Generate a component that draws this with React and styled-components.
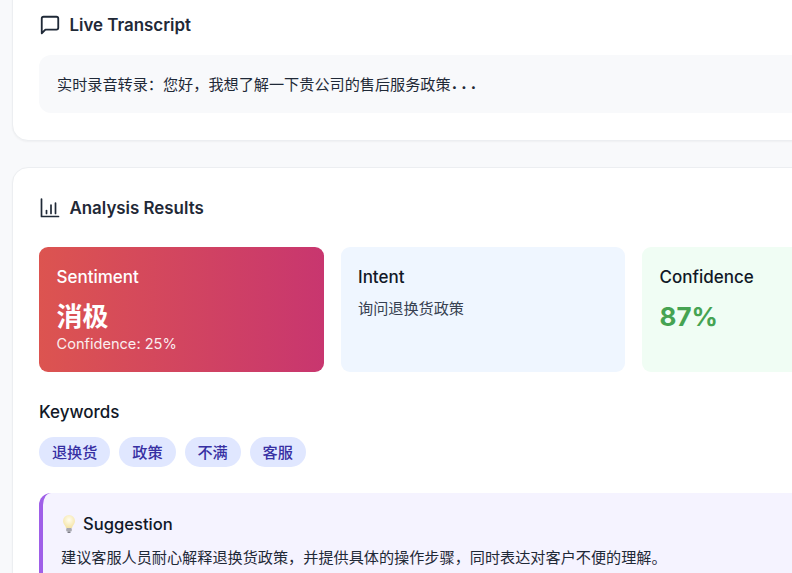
import React from 'react';
import styled, { createGlobalStyle } from 'styled-components';

const GlobalStyle = createGlobalStyle`
  html, body {
    margin: 0;
    padding: 0;
    height: 573px;
    overflow: hidden;
    background: #f8f9fb;
  }
  body {
    font-family: Inter, "Noto Sans CJK SC", sans-serif;
    color: #111827;
  }
`;

const Page = styled.div`
  width: 939px;
  margin-left: 12px;
  margin-top: -24px;
  display: flex;
  flex-direction: column;
  gap: 26px;
`;

const Card = styled.section`
  box-sizing: border-box;
  background: #fff;
  border: 1px solid #eceef1;
  border-radius: 16px;
  box-shadow: 0 1px 2px rgba(0, 0, 0, 0.04);
  padding: ${(p) => p.$padding};
`;

const CardHeader = styled.div`
  display: flex;
  align-items: center;
  gap: 8.5px;
  height: 24px;
  margin-bottom: ${(p) => p.$gap}px;
  font-size: 16.9px;
  font-weight: 600;
  color: #1f2937;
`;

const TranscriptBox = styled.div`
  box-sizing: border-box;
  height: 58px;
  display: flex;
  align-items: center;
  padding: 0 18px 3px;
  background: #f8f9fb;
  border-radius: 12px;
  font-size: 15.15px;
  color: #1f2937;
`;

const Dots = styled.span`
  font-weight: 800;
  letter-spacing: 4.2px;
  margin-left: 1px;
  padding-top: 1px;
`;

const ResultGrid = styled.div`
  display: grid;
  grid-template-columns: repeat(3, 284.5px);
  gap: 17px;
  margin-bottom: 28px;
`;

const ResultCard = styled.div`
  box-sizing: border-box;
  height: 125px;
  padding: 18px 17.5px 0;
  border-radius: 9px;
  background: ${(p) => p.$bg};
  color: ${(p) => p.$color || '#111827'};
`;

const ResultTitle = styled.div`
  font-size: 17px;
  font-weight: 500;
  line-height: 24px;
  margin-bottom: 9px;
`;

const BigValue = styled.div`
  font-size: 26px;
  font-weight: 700;
  line-height: 38px;
  color: ${(p) => p.$color || 'inherit'};
`;

const SubText = styled.div`
  font-size: 14.6px;
  line-height: 17px;
  opacity: 0.9;
`;

const IntentText = styled.div`
  font-size: 15.15px;
  line-height: 24px;
  margin-top: -1px;
  color: #374151;
`;

const SectionTitle = styled.div`
  font-size: 17px;
  font-weight: 500;
  line-height: 24px;
  margin-bottom: 13px;
`;

const ChipRow = styled.div`
  display: flex;
  gap: 9px;
  margin-bottom: 26px;
`;

const Chip = styled.span`
  box-sizing: border-box;
  height: 30px;
  padding: 0 12.9px 2px;
  display: flex;
  align-items: center;
  background: #e0e7ff;
  border-radius: 15px;
  font-size: 15.2px;
  font-weight: 500;
  color: #3730a3;
`;

const SuggestionBox = styled.div`
  padding: 19px 18px 40px;
  background: #f5f3ff;
  border-left: 4px solid #9f5fe8;
  border-radius: 12px;
`;

const SuggestionTitle = styled.div`
  display: flex;
  align-items: center;
  gap: 6px;
  font-size: 16.6px;
  font-weight: 500;
  line-height: 24px;
  margin-bottom: 10px;
`;

const SuggestionText = styled.div`
  font-size: 15.15px;
  line-height: 24px;
  color: #1f2937;
`;

const ChatIcon = () => (
  <svg width="22" height="22" viewBox="0 0 24 24" fill="none" stroke="#1f2937" strokeWidth="2" strokeLinecap="round" strokeLinejoin="round">
    <path d="M21 15a2 2 0 0 1-2 2H7l-4 4V5a2 2 0 0 1 2-2h14a2 2 0 0 1 2 2z" />
  </svg>
);

const ChartIcon = () => (
  <svg width="22" height="22" viewBox="0 0 22 22" fill="none" stroke="#1f2937" strokeWidth="1.7" strokeLinecap="round" strokeLinejoin="round">
    <path d="M2.500 2v17.500h17" />
    <path d="M7.500 16.500v-3" />
    <path d="M12 16.500V8" />
    <path d="M16.500 16.500V6" />
  </svg>
);

const BulbIcon = () => (
  <svg width="16" height="20" viewBox="0 0 16 20">
    <defs>
      <radialGradient id="bulbGlow" cx="50%" cy="38%" r="62%">
        <stop offset="0%" stopColor="#fffdf0" />
        <stop offset="100%" stopColor="#f5e4a6" />
      </radialGradient>
    </defs>
    <path d="M8 1a6 6 0 0 0-6 6c0 2.400 1.600 3.600 2.500 5.400.3.600.4 1.200.5 1.600h6c.1-.4.2-1 .5-1.600C12.400 10.600 14 9.400 14 7a6 6 0 0 0-6-6z" fill="url(#bulbGlow)" />
    <rect x="5.200" y="14" width="5.600" height="3.500" rx="1" fill="#a9a9b0" />
    <rect x="6.400" y="17.500" width="3.200" height="1.500" rx="0.700" fill="#7c7c85" />
  </svg>
);

const keywords = ['退换货', '政策', '不满', '客服'];

const App = () => (
  <>
    <GlobalStyle />
    <Page>
      <Card $padding="36px 26px 27px">
        <CardHeader $gap={18}>
          <ChatIcon />
          Live Transcript
        </CardHeader>
        <TranscriptBox>
          实时录音转录：您好，我想了解一下贵公司的售后服务政策<Dots>...</Dots>
        </TranscriptBox>
      </Card>
      <Card $padding="28px 26px 0">
        <CardHeader $gap={27}>
          <ChartIcon />
          Analysis Results
        </CardHeader>
        <ResultGrid>
          <ResultCard $bg="linear-gradient(90deg, #dc5450, #c8366f)" $color="#fff">
            <ResultTitle>Sentiment</ResultTitle>
            <BigValue>消极</BigValue>
            <SubText>Confidence: 25%</SubText>
          </ResultCard>
          <ResultCard $bg="#eff6ff">
            <ResultTitle>Intent</ResultTitle>
            <IntentText>询问退换货政策</IntentText>
          </ResultCard>
          <ResultCard $bg="#f0fdf4">
            <ResultTitle>Confidence</ResultTitle>
            <BigValue $color="#46a352">87%</BigValue>
          </ResultCard>
        </ResultGrid>
        <SectionTitle>Keywords</SectionTitle>
        <ChipRow>
          {keywords.map((word) => (
            <Chip key={word}>{word}</Chip>
          ))}
        </ChipRow>
        <SuggestionBox>
          <SuggestionTitle>
            <BulbIcon />
            Suggestion
          </SuggestionTitle>
          <SuggestionText>建议客服人员耐心解释退换货政策，并提供具体的操作步骤，同时表达对客户不便的理解。</SuggestionText>
        </SuggestionBox>
      </Card>
    </Page>
  </>
);

export default App;
